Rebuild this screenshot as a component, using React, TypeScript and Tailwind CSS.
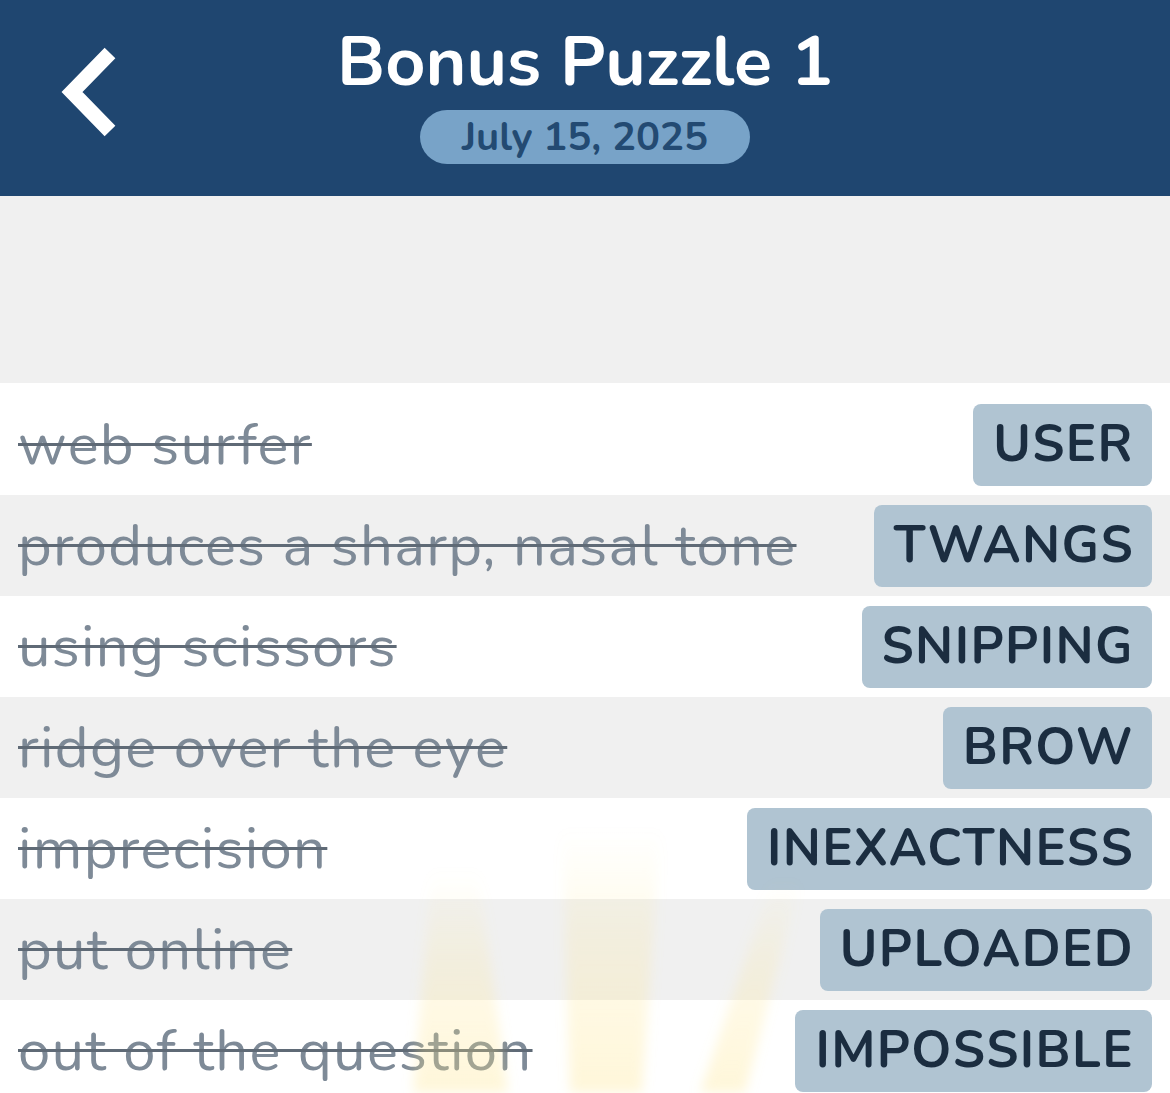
import React from 'react';

type Entry = { clue: string; answer: string };

const ENTRIES: Entry[] = [
    { clue: 'web surfer', answer: 'USER' },
    { clue: 'produces a sharp, nasal tone', answer: 'TWANGS' },
    { clue: 'using scissors', answer: 'SNIPPING' },
    { clue: 'ridge over the eye', answer: 'BROW' },
    { clue: 'imprecision', answer: 'INEXACTNESS' },
    { clue: 'put online', answer: 'UPLOADED' },
    { clue: 'out of the question', answer: 'IMPOSSIBLE' },
];

const FONT = "font-['Nunito','Lato','Noto_Sans',sans-serif]";

const BackChevron = () => (
    <svg width="64" height="96" viewBox="0 0 64 96" fill="none">
        <polyline points="50,8 12,47 50,86" stroke="#ffffff" strokeWidth="15" strokeLinecap="butt" strokeLinejoin="miter" />
    </svg>
);

const Rays = () => (
    <svg className="pointer-events-none absolute left-0 top-[800px]" width="1170" height="293" viewBox="0 0 1170 293">
        <defs>
            <linearGradient id="ray" x1="0" y1="0" x2="0" y2="1">
                <stop offset="0" stopColor="#fde68a" stopOpacity="0" />
                <stop offset="0.4" stopColor="#fde68a" stopOpacity="0.18" />
                <stop offset="1" stopColor="#fde68a" stopOpacity="0.32" />
            </linearGradient>
            <filter id="soft" x="-20%" y="-20%" width="140%" height="140%">
                <feGaussianBlur stdDeviation="6" />
            </filter>
        </defs>
        <g filter="url(#soft)">
            <polygon points="432,70 478,70 508,293 413,293" fill="url(#ray)" />
            <polygon points="562,30 660,30 642,293 570,293" fill="url(#ray)" />
            <polygon points="772,80 800,80 745,293 700,293" fill="url(#ray)" />
        </g>
    </svg>
);

const Row: React.FC<{ entry: Entry; shaded: boolean }> = ({ entry, shaded }) => (
    <div className={`flex h-[101px] items-center justify-between pl-[18px] pr-[18px] ${shaded ? 'bg-[#f0f0f0]' : 'bg-white'}`}>
        <p className="text-[58px] leading-none tracking-[1.3px] text-[#7e8a97] line-through decoration-[#5f6a76] decoration-[3px] whitespace-nowrap">
            {entry.clue}
        </p>
        <span className="flex h-[82px] items-center rounded-[8px] bg-[#b0c4d2] pl-[20px] pr-[18px] text-[51px] font-bold leading-none tracking-[1.4px] text-[#1b2d40]">
            {entry.answer}
        </span>
    </div>
);

export default function App() {
    return (
        <div className={`relative h-[1093px] w-[1170px] overflow-hidden bg-white ${FONT}`}>
            <header className="grid h-[196px] grid-cols-[1fr_auto_1fr] bg-[#1f4670]">
                <div className="flex items-start pl-[60px] pt-[45px]">
                    <BackChevron />
                </div>
                <div className="flex flex-col items-center pt-[27px]">
                    <h1 className="text-[70px] font-bold leading-none text-white">Bonus Puzzle 1</h1>
                    <div className="mt-[13px] flex h-[54px] w-[330px] items-center justify-center rounded-full bg-[#78a3c8]">
                        <span className="text-[40px] font-bold leading-none text-[#234a72]">July 15, 2025</span>
                    </div>
                </div>
                <div />
            </header>
            <div className="h-[187px] bg-[#f0f0f0]" />
            <div className="bg-white pt-[11px]">
                {ENTRIES.map((e, i) => (
                    <Row key={e.clue} entry={e} shaded={i % 2 === 1} />
                ))}
            </div>
            <Rays />
        </div>
    );
}
